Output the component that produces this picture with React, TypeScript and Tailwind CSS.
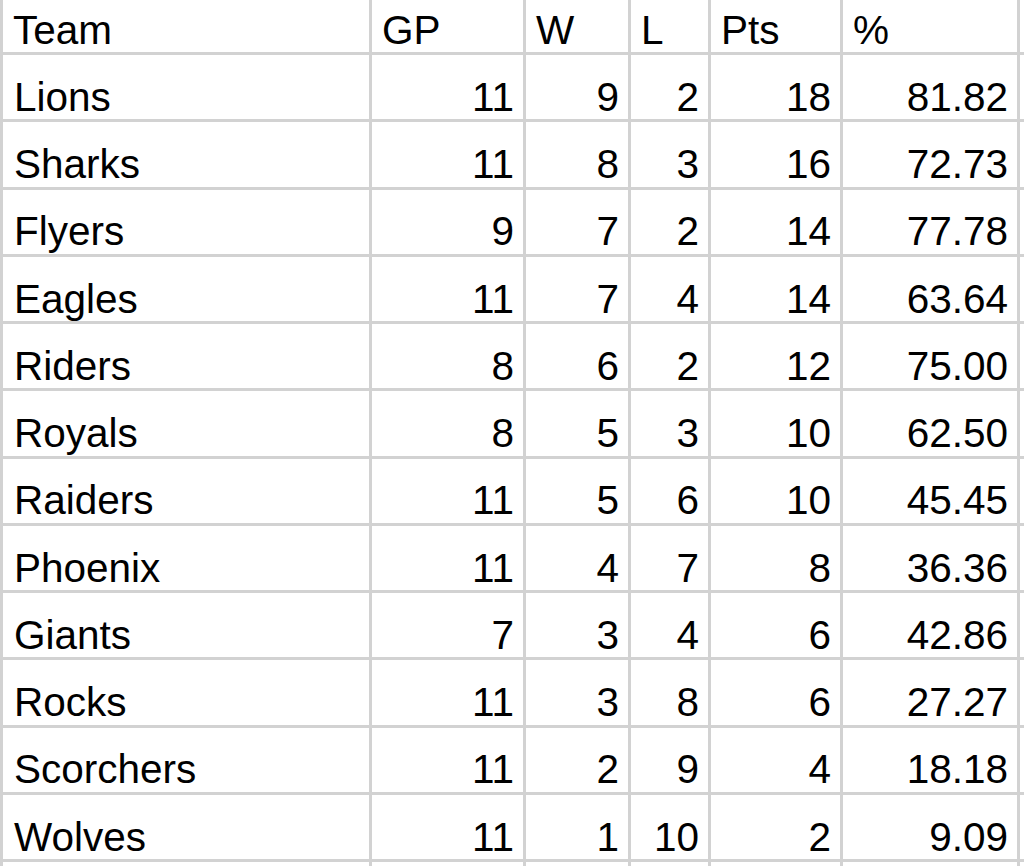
import { Fragment } from 'react'

const rows: [string, number, number, number, number, string][] = [
  ['Lions', 11, 9, 2, 18, '81.82'],
  ['Sharks', 11, 8, 3, 16, '72.73'],
  ['Flyers', 9, 7, 2, 14, '77.78'],
  ['Eagles', 11, 7, 4, 14, '63.64'],
  ['Riders', 8, 6, 2, 12, '75.00'],
  ['Royals', 8, 5, 3, 10, '62.50'],
  ['Raiders', 11, 5, 6, 10, '45.45'],
  ['Phoenix', 11, 4, 7, 8, '36.36'],
  ['Giants', 7, 3, 4, 6, '42.86'],
  ['Rocks', 11, 3, 8, 6, '27.27'],
  ['Scorchers', 11, 2, 9, 4, '18.18'],
  ['Wolves', 11, 1, 10, 2, '9.09'],
]

const headers = ['Team', 'GP', 'W', 'L', 'Pts', '%']

export default function App() {
  return (
    <div
      className="w-[1024px] h-[866px] overflow-hidden bg-white text-black text-[40.5px] leading-none"
      style={{ fontFamily: '"Liberation Sans", Arial, sans-serif' }}
    >
      <div className="grid grid-cols-[366px_151px_102px_77px_129px_174px_1fr] grid-rows-[52px] auto-rows-[64.25px] gap-[3px] bg-[#d2d2d2] pl-[3px]">
        {headers.map((h) => (
          <div key={h} className="bg-white flex items-end pl-[10px] pb-[2px]">
            {h}
          </div>
        ))}
        <div className="bg-white" />
        {rows.map((r) => (
          <Fragment key={r[0]}>
            <div className="bg-white flex items-end pl-[11px] pb-[2px]">{r[0]}</div>
            {r.slice(1).map((v, i) => (
              <div key={i} className="bg-white flex items-end justify-end pr-[9px] pb-[2px]">
                {v}
              </div>
            ))}
            <div className="bg-white" />
          </Fragment>
        ))}
        {Array.from({ length: 7 }).map((_, i) => (
          <div key={'e' + i} className="bg-white" />
        ))}
      </div>
    </div>
  )
}
